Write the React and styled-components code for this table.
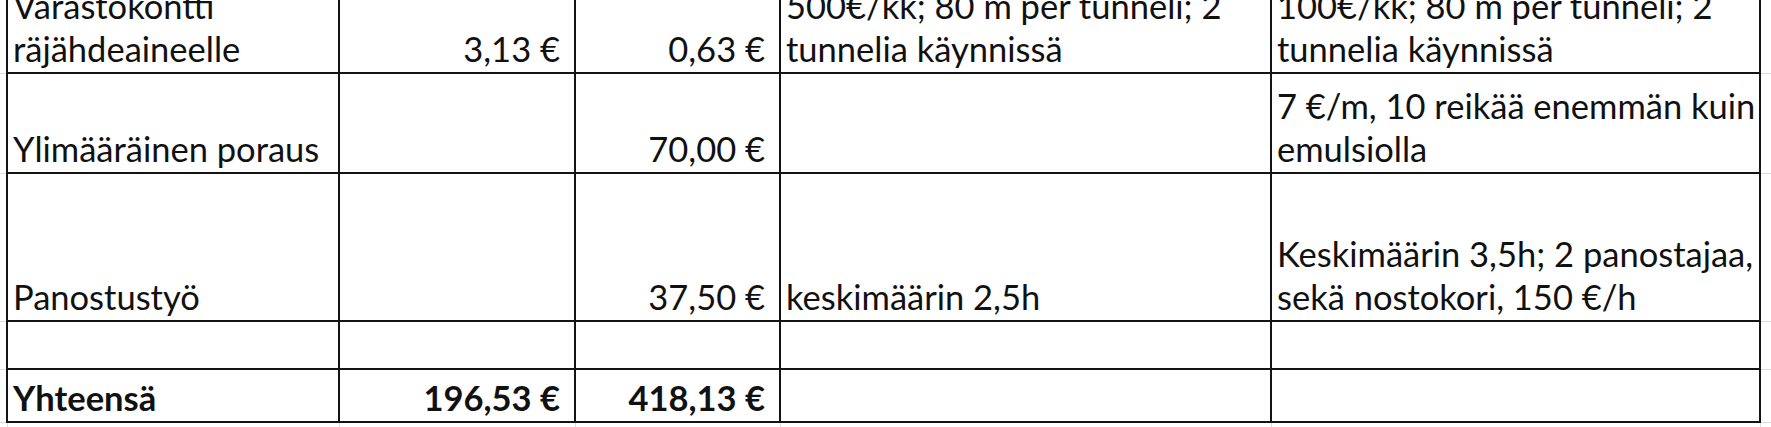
import React from "react";
import styled, { createGlobalStyle } from "styled-components";

const Global = createGlobalStyle`
  html, body { margin: 0; padding: 0; background: #ffffff; overflow: hidden; }
  body { font-family: Lato, "Open Sans", sans-serif; }
`;

const Viewport = styled.div`
  width: 1771px;
  height: 427px;
  overflow: hidden;
  background: #fff;
`;

const Sheet = styled.table`
  border-collapse: collapse;
  table-layout: fixed;
  width: 1771px;
  margin-top: -28px;
  font-family: Lato, "Open Sans", sans-serif;
  font-size: 34.5px;
  line-height: 43px;
  color: #111;
`;

const Row = styled.tr`
  height: ${(p) => p.$h}px;
`;

const Cell = styled.td`
  border: 2px solid #141414;
  padding: 0 ${(p) => (p.$num ? "14px" : "4px")} 2px ${(p) => (p.$num ? "4px" : "5px")};
  vertical-align: bottom;
  text-align: ${(p) => (p.$num ? "right" : "left")};
  font-weight: ${(p) => (p.$bold ? 700 : 400)};
  white-space: pre;
  overflow: hidden;
`;

const EdgeCell = styled.td`
  padding: 0;
  border: 1px solid #dcdcdc;
  border-top: none;
  ${(p) => p.$left && "border-left: none;"}
  ${(p) => p.$right && "border-right: none;"}
  ${(p) => p.$bottom && "border-bottom: none;"}
`;

const cols = [7, 332, 236, 205, 491, 489, 11];

const rows = [
  {
    h: 100,
    cells: [
      "Varastokontti\nräjähdeaineelle",
      "3,13 €",
      "0,63 €",
      "500€/kk; 80 m per tunneli; 2\ntunnelia käynnissä",
      "100€/kk; 80 m per tunneli; 2\ntunnelia käynnissä",
    ],
  },
  {
    h: 100,
    cells: [
      "Ylimääräinen poraus",
      "",
      "70,00 €",
      "",
      "7 €/m, 10 reikää enemmän kuin\nemulsiolla",
    ],
  },
  {
    h: 148,
    cells: [
      "Panostustyö",
      "",
      "37,50 €",
      "keskimäärin 2,5h",
      "Keskimäärin 3,5h; 2 panostajaa,\nsekä nostokori, 150 €/h",
    ],
  },
  { h: 48, cells: ["", "", "", "", ""] },
  { h: 53, bold: true, cells: ["Yhteensä", "196,53 €", "418,13 €", "", ""] },
];

export default function App() {
  return (
    <Viewport>
      <Global />
      <Sheet>
        <colgroup>
          {cols.map((w, i) => (
            <col key={i} style={{ width: w }} />
          ))}
        </colgroup>
        <tbody>
          {rows.map((r, ri) => (
            <Row key={ri} $h={r.h}>
              <EdgeCell $left />
              {r.cells.map((c, ci) => (
                <Cell key={ci} $num={ci === 1 || ci === 2} $bold={r.bold}>
                  {c}
                </Cell>
              ))}
              <EdgeCell $right />
            </Row>
          ))}
          <Row $h={8}>
            <EdgeCell $left $bottom />
            {[0, 1, 2, 3, 4].map((i) => (
              <EdgeCell key={i} $bottom />
            ))}
            <EdgeCell $right $bottom />
          </Row>
        </tbody>
      </Sheet>
    </Viewport>
  );
}
